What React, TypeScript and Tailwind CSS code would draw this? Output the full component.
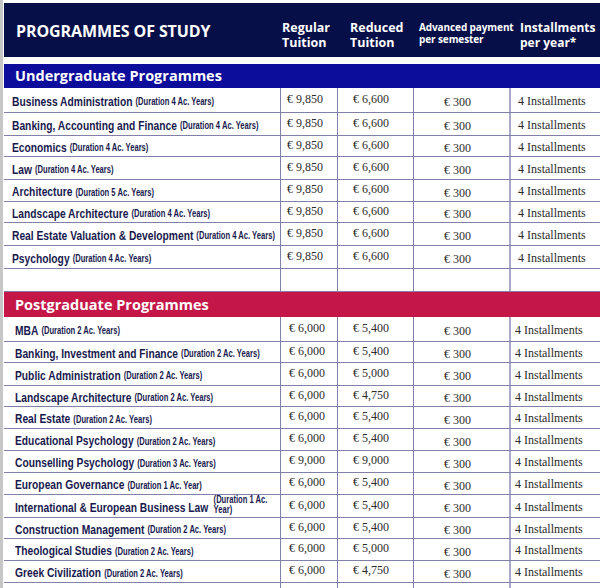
const undergrad = [
  { name: "Business Administration", dur: "(Duration 4 Ac. Years)", reg: "€ 9,850", red: "€ 6,600", h: "h-[25px]" },
  { name: "Banking, Accounting and Finance", dur: "(Duration 4 Ac. Years)", reg: "€ 9,850", red: "€ 6,600", h: "h-[23px]" },
  { name: "Economics", dur: "(Duration 4 Ac. Years)", reg: "€ 9,850", red: "€ 6,600", h: "h-[21px]" },
  { name: "Law", dur: "(Duration 4 Ac. Years)", reg: "€ 9,850", red: "€ 6,600", h: "h-[23px]" },
  { name: "Architecture", dur: "(Duration 5 Ac. Years)", reg: "€ 9,850", red: "€ 6,600", h: "h-[22px]" },
  { name: "Landscape Architecture", dur: "(Duration 4 Ac. Years)", reg: "€ 9,850", red: "€ 6,600", h: "h-[21px]" },
  { name: "Real Estate Valuation & Development", dur: "(Duration 4 Ac. Years)", reg: "€ 9,850", red: "€ 6,600", h: "h-[23px]" },
  { name: "Psychology", dur: "(Duration 4 Ac. Years)", reg: "€ 9,850", red: "€ 6,600", h: "h-[23px]" },
]

const postgrad = [
  { name: "MBA", dur: "(Duration 2 Ac. Years)", reg: "€ 6,000", red: "€ 5,400", h: "h-[25px]" },
  { name: "Banking, Investment and Finance", dur: "(Duration 2 Ac. Years)", reg: "€ 6,000", red: "€ 5,400", h: "h-[21px]" },
  { name: "Public Administration", dur: "(Duration 2 Ac. Years)", reg: "€ 6,000", red: "€ 5,000", h: "h-[23px]" },
  { name: "Landscape Architecture", dur: "(Duration 2 Ac. Years)", reg: "€ 6,000", red: "€ 4,750", h: "h-[21px]" },
  { name: "Real Estate", dur: "(Duration 2 Ac. Years)", reg: "€ 6,000", red: "€ 5,400", h: "h-[22px]" },
  { name: "Educational Psychology", dur: "(Duration 2 Ac. Years)", reg: "€ 6,000", red: "€ 5,400", h: "h-[22px]" },
  { name: "Counselling Psychology", dur: "(Duration 3 Ac. Years)", reg: "€ 9,000", red: "€ 9,000", h: "h-[22px]" },
  { name: "European Governance", dur: "(Duration 1 Ac. Year)", reg: "€ 6,000", red: "€ 5,400", h: "h-[22px]" },
  { name: "International & European Business Law", dur: "(Duration 1 Ac. Year)", reg: "€ 6,000", red: "€ 5,400", h: "h-[23px]", wrap: true },
  { name: "Construction Management", dur: "(Duration 2 Ac. Years)", reg: "€ 6,000", red: "€ 5,400", h: "h-[21px]" },
  { name: "Theological Studies", dur: "(Duration 2 Ac. Years)", reg: "€ 6,000", red: "€ 5,000", h: "h-[22px]" },
  { name: "Greek Civilization", dur: "(Duration 2 Ac. Years)", reg: "€ 6,000", red: "€ 4,750", h: "h-[22px]" },
]

const cols = "grid grid-cols-[276px_57px_76px_96px_1fr]"
const line = "border-[#8080a8]"
// no condensed face installed, so squeeze Liberation Sans Bold horizontally
const narrow = "font-['Liberation_Sans',Arial,sans-serif] font-bold text-[#18194e]"
const serif = "font-['Liberation_Serif',serif] text-[12px] text-[#2b2b2b] leading-none"

type Row = { name: string; dur: string; reg: string; red: string; h: string; wrap?: boolean }

const DataRow = ({ r, post }: { r: Row; post?: boolean }) => (
  <div className={`${cols} ${r.h} border-b ${line}`}>
    <div className={`flex items-center pt-[3px] overflow-hidden ${post ? "pl-[11px]" : "pl-[8px]"}`}>
      <span className={`inline-flex items-center whitespace-nowrap origin-left scale-x-[0.76] ${narrow}`}>
        <span className="text-[13.5px] leading-none">{r.name}</span>
        {r.wrap ? (
          <span className="ml-[7px] text-[10px] leading-[10px] w-[76px] whitespace-normal -mt-[5px]">{r.dur}</span>
        ) : (
          <span className="ml-[4px] text-[10px] leading-none pt-[1px]">{r.dur}</span>
        )}
      </span>
    </div>
    <div className={`flex items-center pb-[3px] border-l ${line} ${post ? "pl-[8px]" : "pl-[6px]"} ${serif}`}>{r.reg}</div>
    <div className={`flex items-center pb-[3px] border-l ${line} pl-[15px] ${serif}`}>{r.red}</div>
    <div className={`flex items-center pt-[4px] border-l ${line} pl-[30px] ${serif}`}>€ 300</div>
    <div className={`flex items-center pt-[1px] border-l-2 border-[#a9a9c9] ${post ? "pl-[4px]" : "pl-[7px]"} ${serif}`}>4 Installments</div>
  </div>
)

const EmptyRow = ({ h }: { h: string }) => (
  <div className={`${cols} ${h} border-b ${line}`}>
    <div />
    <div className={`border-l ${line}`} />
    <div className={`border-l ${line}`} />
    <div className={`border-l ${line}`} />
    <div className="border-l-2 border-[#a9a9c9]" />
  </div>
)

export default function App() {
  return (
    <div className="w-[600px] h-[588px] overflow-hidden bg-white flex">
      <div className="w-[3px] shrink-0 bg-[#c6c6c6]" />
      <div className="w-[1px] shrink-0 bg-white" />
      <div className="flex-1 pt-[3px] font-['Open_Sans',sans-serif]">
        <div className={`${cols} h-[54px] bg-[#070f48] text-white font-bold`}>
          <div className="flex items-center pl-[12px] pt-[2px] text-[16px] tracking-[-0.1px]">PROGRAMMES OF STUDY</div>
          <div className="pl-[2px] pt-[17px] text-[12.5px] leading-[15px]">Regular<br />Tuition</div>
          <div className="pl-[13px] pt-[17px] text-[12.5px] leading-[15px]">Reduced<br />Tuition</div>
          <div className="pl-[6px] pt-[18px] text-[10px] leading-[12px] tracking-[-0.1px] whitespace-nowrap">Advanced payment<br />per semester</div>
          <div className="pl-[11px] pt-[17px] text-[12px] leading-[15px] whitespace-nowrap">Installments<br />per year*</div>
        </div>
        <div className="h-[7px]" />
        <div className="h-[24px] bg-[#0d0d9b] flex items-center pl-[11px] text-white font-bold text-[14.5px]">Undergraduate Programmes</div>
        {undergrad.map(r => <DataRow key={r.name} r={r} />)}
        <EmptyRow h="h-[23px]" />
        <div className="h-[25px] bg-[#c41747] flex items-center pl-[11px] text-white font-bold text-[14.5px]">Postgraduate Programmes</div>
        {postgrad.map(r => <DataRow key={r.name} r={r} post />)}
        <EmptyRow h="h-[23px]" />
      </div>
    </div>
  )
}
